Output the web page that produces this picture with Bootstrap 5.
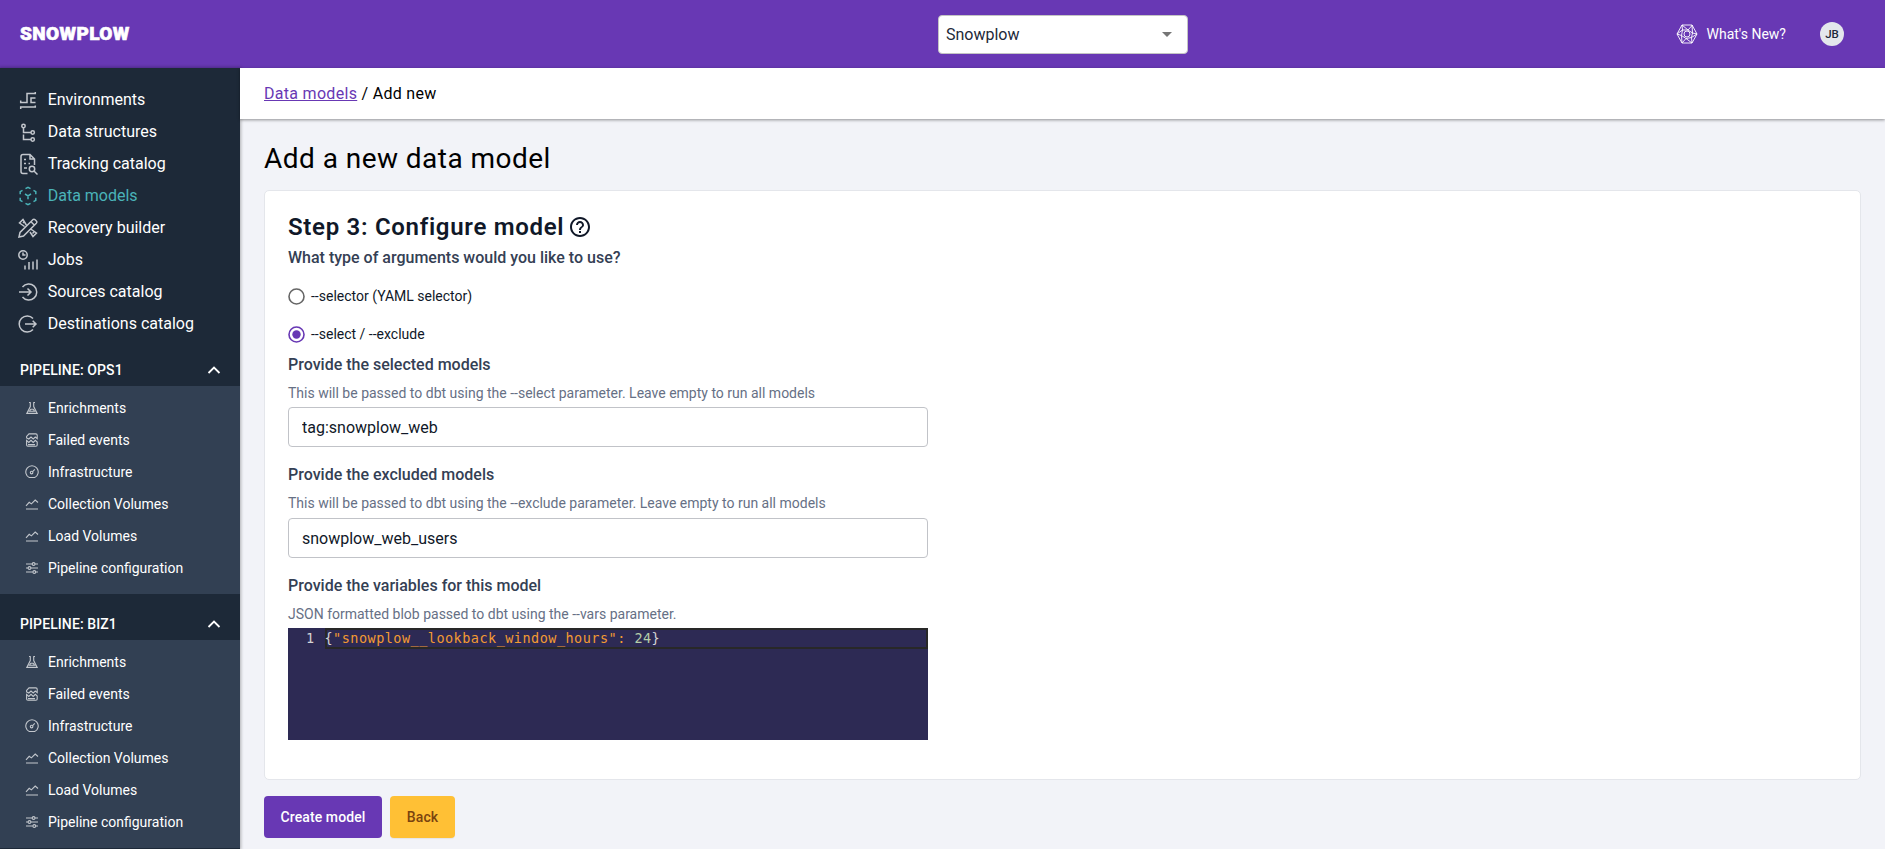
<!DOCTYPE html>
<html lang="en">
<head>
<meta charset="utf-8">
<title>Add a new data model</title>
<link href="https://cdn.jsdelivr.net/npm/bootstrap@5.3.0/dist/css/bootstrap.min.css" rel="stylesheet">
<style>
  html { overflow: hidden; }
  body { font-family: Roboto, "Liberation Sans", sans-serif; font-size: 16px; letter-spacing: 0; line-height: 24px; background: #f2f3f8; color: #101828; height: 100vh; overflow: hidden; }
  .topbar { height: 68px; background: #6838b4; color: #fff; padding-left: 20px; }
  .brand { font-weight: 900; font-size: 19px; letter-spacing: .4px; -webkit-text-stroke: .6px #fff; width: 918px; }
  .org { width: 250px; height: 39px; border: 1px solid #c4c4c4; border-radius: 4px; background: #fff; color: #1d2939; padding: 1px 15px 0 7px; }
  .whats { font-size: 14px; margin-left: 488px; gap: 8.5px; }
  .avatar { width: 24px; height: 24px; background: #e4e7ec; color: #1d2939; font-size: 11.5px; font-weight: 500; margin-left: 34px; }
  .side { width: 240px; background: #1d2938; color: #fff; box-shadow: 0 0 3px 1px rgba(0,0,0,.28); }
  .side svg, .topbar svg { fill: none; stroke: currentColor; flex: none; }
  .side ul { margin: 0; }
  .mainnav { padding-top: 16px; height: 272px; }
  .side li { height: 32px; }
  .side li svg { color: #c3c7cd; stroke-width: 1.5; }
  .mainnav li { padding-left: 18px; gap: 9.7px; }
  .side li.current, .side li.current svg { color: #4ab3b8; }
  .group { height: 46px; padding: 14px 19px 0 20px; font-size: 14px; font-weight: 500; letter-spacing: .1px; }
  .subnav { background: #324053; height: 208px; padding-top: 6px; font-size: 14px; }
  .subnav li { padding-left: 25px; gap: 9px; }
  .subnav li svg { stroke-width: 1.1; }
  .crumbs { letter-spacing: .3px; height: 51px; background: #fff; padding-left: 24px; z-index: 2; box-shadow: 0 1px 3px rgba(0,0,0,.42); color: #000; }
  .crumbs a { color: #6838b4; }
  .body-area { padding: 0 24px; }
  h1 { font-size: 28px; font-weight: 400; color: #000; height: 71px; padding-top: 22px; line-height: 36px; margin: 0; letter-spacing: .46px; }
  .panel { height: 590px; background: #fff; border: 1px solid #e4e6eb; border-radius: 5px; padding: 20px 23px 0; }
  h2 { font-size: 24px; font-weight: 600; line-height: 32px; height: 32px; letter-spacing: .7px; margin: 0; gap: 4px; }
  .lbl { font-weight: 500; color: #344054; line-height: 24px; }
  .ask { margin-top: 3px; margin-bottom: 7px; }
  .hint { font-size: 14px; color: #667085; line-height: 20px; margin-top: 6px; }
  .gap5 { margin-bottom: 5px; }
  .opt { height: 38px; font-size: 14px; gap: 6px; }
  .field { width: 640px; height: 40px; border: 1px solid #c1c3c8; border-radius: 4px; font-size: 16px; padding: 0 13px; color: #101828; display: block; }
  .editor { width: 640px; height: 112px; background: #2d2a54; font-family: "DejaVu Sans Mono", monospace; font-size: 13.5px; line-height: 17px; letter-spacing: .48px; color: #d4d4d4; }
  .gutter { width: 36.5px; padding: 2px 10px 0 0; }
  .codeline { height: 21px; border: 2px solid #282828; color: #f39a32; white-space: pre; }
  .codeline code { font: inherit; color: inherit; margin-left: -2px; }
  .codeline .punc { color: #d4d4d4; }
  .codeline .num { color: #b5cea8; }
  .acts { margin-top: 16px; gap: 8px; }
  .act { height: 42px; border-radius: 4px; font-size: 14px; font-weight: 500; padding: 0; border: 0; letter-spacing: .1px; }
  .act-main, .act-main:hover { background: #6838b4; color: #fff; width: 118px; }
  .act-back, .act-back:hover { background: #ffc035; color: #7a430f; width: 65px; box-shadow: 0 1px 1px rgba(0,0,0,.06); }
</style>
</head>
<body class="d-flex flex-column">
<svg width="0" height="0" class="position-absolute">
  <symbol id="flask" viewBox="0 0 14 14"><path d="M4 1.5h1.7M8.3 1.5H10M5.3 1.5V5.5L1.8 12.4h10.4L8.7 5.5V1.5M4.4 10.3l1.4-2h2.4l1.4 2z"/></symbol>
  <symbol id="failed" viewBox="0 0 14 14"><path d="M1.6 5V3.4L4 .9h6.8q1.4 0 1.4 1.4V5.6L10.3 4 8.2 6 6 4 3.8 6ZM1.6 7.4l2.2 2L6 7.3l2.2 2.1 2.1-2.1 1.9 1.8v3q0 1.2-1.3 1.2H3q-1.4 0-1.4-1.2ZM3 11.6h7"/></symbol>
  <symbol id="gauge" viewBox="0 0 14 14"><path d="M4.3 12.5A6.2 6.2 0 1 1 9.700 12.500Z"/><circle cx="6.600" cy="7.600" r="1.300"/><path d="M7.600 6.700 9.800 4.400"/></symbol>
  <symbol id="chart" viewBox="0 0 14 14"><path d="M1 12h12M1 8.800 4.200 5.300 6.400 6.900 10.200 3 13 5.500"/></symbol>
  <symbol id="sliders" viewBox="0 0 14 14"><path d="M1 3H7.200M10 3H13M1 7H3M6 7H13M1 11H7.800M10.800 11H13"/><circle cx="8.600" cy="3" r="1.400"/><circle cx="4.500" cy="7" r="1.400"/><circle cx="9.300" cy="11" r="1.400"/></symbol>
</svg>

<header class="topbar d-flex align-items-center flex-shrink-0">
  <div class="brand">SNOWPLOW</div>
  <div class="org d-flex align-items-center justify-content-between"><span>Snowplow</span>
    <svg width="10" height="5" viewBox="0 0 10 5"><path d="M0 0h10L5 5z" fill="#757575" stroke="none"/></svg></div>
  <div class="whats d-flex align-items-center">
    <svg width="22" height="20" viewBox="0 0 22 20" stroke-width=".9"><path d="M6 1h10l5 9-5 9H6l-5-9zM6 1l6 5 4.500-5M16 1l.5 8L21 10M21 10l-5.500 3.500L16 19M16 19l-6-4.500L6 19M6 19l-.5-7.500L1 10M1 10l5.500-4L6 1M12 6 6.500 6 5.500 11.500 10 14.500 15.500 13.500 16.500 9z"/><circle cx="11" cy="10" r="3"/></svg>
    <span>What's New?</span></div>
  <div class="avatar rounded-circle d-flex align-items-center justify-content-center">JB</div>
</header>

<div class="d-flex flex-grow-1">
  <nav class="side flex-shrink-0">
    <ul class="mainnav list-unstyled">
      <li class="d-flex align-items-center"><svg width="20" height="20" viewBox="0 0 20 20"><path d="M2.700 10.500v2H9V3.500h8.300V2M17.500 8H13v4.500h4.500M2.700 19v-2h14.600v-1.500"/></svg>Environments</li>
      <li class="d-flex align-items-center"><svg width="20" height="20" viewBox="0 0 20 20"><circle cx="5.500" cy="4" r="1.700"/><circle cx="14.700" cy="10.500" r="1.700"/><circle cx="14.700" cy="17.500" r="1.700"/><path d="M5.500 5.700v4.800H13M5.500 12.500v5H13"/></svg>Data structures</li>
      <li class="d-flex align-items-center"><svg width="20" height="22" viewBox="0 0 20 22"><path d="M9.500 20.500H5q-2 0-2-2V3.500q0-2 2-2h7L16.500 6v6M12 1.500V6h4.500M6 6.500h2M6 10.500h2M10.500 10.500h1.500M6 15h3"/><circle cx="14" cy="16" r="2.700"/><path d="M16 18l3.500 3.500"/></svg>Tracking catalog</li>
      <li class="current d-flex align-items-center"><svg width="20" height="20" viewBox="0 0 20 20"><path d="M7.500 2.700 10 1.300l2.500 1.400M15.500 4.300l2.300 1.300v2.700M17.800 11.700v2.700l-2.300 1.300M12.500 17.300 10 18.700l-2.500-1.400M4.500 15.700l-2.300-1.300v-2.700M2.200 8.300V5.600l2.300-1.300M7 8l3 1.800L13 8M10 9.800v3.400"/></svg>Data models</li>
      <li class="d-flex align-items-center"><svg width="20" height="20" viewBox="0 0 20 20"><path d="M1 19l1-4.500L14.800 1.700q1.200-1 2.300.1l1.200 1.200q1.100 1.100 0 2.300L5.500 18zM13 3.700 16.300 7M8 6.500 5 1.500 1.500 5 6.500 8.500M5 5l1.500-1.500M12 14l3 4.500 3.500-3.500-5-3.500M14.500 15.500 16 14M8 6.500l1 1M12.500 11l1.500.8"/></svg>Recovery builder</li>
      <li class="d-flex align-items-center"><svg width="20" height="20" viewBox="0 0 20 20"><circle cx="5" cy="5" r="4.200"/><path d="M5 2.500V5h2.500M7 19.500v-4M11 19.500v-7.500M15 19.500v-8M19 19.500V9.500"/></svg>Jobs</li>
      <li class="d-flex align-items-center"><svg width="20" height="20" viewBox="0 0 20 20"><path d="M4.500 5A8 8 0 1 1 4.500 15M1 10h12M9.500 6.500 13 10l-3.500 3.500"/></svg>Sources catalog</li>
      <li class="d-flex align-items-center"><svg width="20" height="20" viewBox="0 0 20 20"><path d="M15 4.500A8 8 0 1 0 15 15.500M7 10h11M14.700 6.800 18 10l-3.300 3.200"/></svg>Destinations catalog</li>
    </ul>
    <div class="group d-flex align-items-center justify-content-between"><span>PIPELINE: OPS1</span><svg width="14" height="8" viewBox="0 0 14 8" stroke-width="1.800"><path d="M1.500 7 7 1.500 12.500 7"/></svg></div>
    <ul class="subnav list-unstyled">
      <li class="d-flex align-items-center"><svg width="14" height="14"><use href="#flask"/></svg>Enrichments</li>
      <li class="d-flex align-items-center"><svg width="14" height="14"><use href="#failed"/></svg>Failed events</li>
      <li class="d-flex align-items-center"><svg width="14" height="14"><use href="#gauge"/></svg>Infrastructure</li>
      <li class="d-flex align-items-center"><svg width="14" height="14"><use href="#chart"/></svg>Collection Volumes</li>
      <li class="d-flex align-items-center"><svg width="14" height="14"><use href="#chart"/></svg>Load Volumes</li>
      <li class="d-flex align-items-center"><svg width="14" height="14"><use href="#sliders"/></svg>Pipeline configuration</li>
    </ul>
    <div class="group d-flex align-items-center justify-content-between"><span>PIPELINE: BIZ1</span><svg width="14" height="8" viewBox="0 0 14 8" stroke-width="1.800"><path d="M1.500 7 7 1.500 12.500 7"/></svg></div>
    <ul class="subnav list-unstyled">
      <li class="d-flex align-items-center"><svg width="14" height="14"><use href="#flask"/></svg>Enrichments</li>
      <li class="d-flex align-items-center"><svg width="14" height="14"><use href="#failed"/></svg>Failed events</li>
      <li class="d-flex align-items-center"><svg width="14" height="14"><use href="#gauge"/></svg>Infrastructure</li>
      <li class="d-flex align-items-center"><svg width="14" height="14"><use href="#chart"/></svg>Collection Volumes</li>
      <li class="d-flex align-items-center"><svg width="14" height="14"><use href="#chart"/></svg>Load Volumes</li>
      <li class="d-flex align-items-center"><svg width="14" height="14"><use href="#sliders"/></svg>Pipeline configuration</li>
    </ul>
  </nav>

  <main class="flex-grow-1">
    <div class="crumbs d-flex align-items-center position-relative"><a href="#">Data models</a><span>&nbsp;/ Add new</span></div>
    <div class="body-area">
      <h1>Add a new data model</h1>
      <section class="panel">
        <h2 class="d-flex align-items-center"><span>Step 3: Configure model</span>
          <svg width="24" height="24" viewBox="0 0 24 24" fill="#101828"><path d="M11 18h2v-2h-2v2zm1-16C6.480 2 2 6.480 2 12s4.480 10 10 10 10-4.480 10-10S17.520 2 12 2zm0 18c-4.410 0-8-3.590-8-8s3.590-8 8-8 8 3.590 8 8-3.590 8-8 8zm0-14c-2.210 0-4 1.790-4 4h2c0-1.100.9-2 2-2s2 .9 2 2c0 2-3 1.750-3 5h2c0-2.250 3-2.500 3-5 0-2.210-1.790-4-4-4z"/></svg></h2>
        <div class="lbl ask">What type of arguments would you like to use?</div>
        <label class="opt d-flex align-items-center"><svg width="17" height="17" viewBox="0 0 17 17" fill="none"><circle cx="8.500" cy="8.500" r="7.500" stroke="#666" stroke-width="1.600"/></svg>--selector (YAML selector)</label>
        <label class="opt d-flex align-items-center"><svg width="17" height="17" viewBox="0 0 17 17" fill="none"><circle cx="8.500" cy="8.500" r="7.500" stroke="#6838b4" stroke-width="1.600"/><circle cx="8.500" cy="8.500" r="4.200" fill="#6838b4"/></svg>--select / --exclude</label>
        <div class="lbl">Provide the selected models</div>
        <div class="hint mb-1">This will be passed to dbt using the --select parameter. Leave empty to run all models</div>
        <input class="field" type="text" value="tag:snowplow_web">
        <div class="lbl mt-3">Provide the excluded models</div>
        <div class="hint gap5">This will be passed to dbt using the --exclude parameter. Leave empty to run all models</div>
        <input class="field" type="text" value="snowplow_web_users">
        <div class="lbl mt-3">Provide the variables for this model</div>
        <div class="hint mb-1">JSON formatted blob passed to dbt using the --vars parameter.</div>
        <div class="editor d-flex">
          <div class="gutter text-end">1</div>
          <div class="codeline flex-grow-1"><code><span class="punc">{</span>"snowplow__lookback_window_hours": <span class="num">24</span><span class="punc">}</span></code></div>
        </div>
      </section>
      <div class="acts d-flex">
        <button class="act act-main btn">Create model</button>
        <button class="act act-back btn">Back</button>
      </div>
    </div>
  </main>
</div>
<script src="https://cdn.jsdelivr.net/npm/bootstrap@5.3.0/dist/js/bootstrap.bundle.min.js"></script>
</body>
</html>
